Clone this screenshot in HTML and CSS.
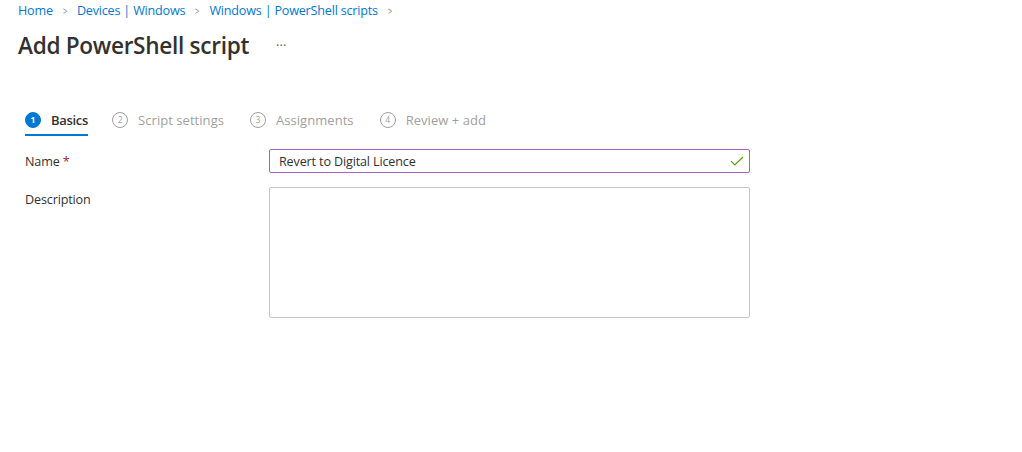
FILE: index.html
```html
<!DOCTYPE html>
<html lang="en">
<head>
    <meta charset="UTF-8">
    <title>Add PowerShell script</title>
    <link rel="stylesheet" href="styles.css">
</head>
<body>
    <nav class="breadcrumb">
        <a href="#">Home</a>
        <span class="sep">&gt;</span>
        <a href="#">Devices | Windows</a>
        <span class="sep">&gt;</span>
        <a href="#">Windows | PowerShell scripts</a>
        <span class="sep">&gt;</span>
    </nav>

    <div class="title-row">
        <h1>Add PowerShell script</h1>
        <span class="more">&middot;&middot;&middot;</span>
    </div>

    <div class="steps">
        <div class="step active">
            <span class="num">1</span>
            <span class="label">Basics</span>
        </div>
        <div class="step">
            <span class="num">2</span>
            <span class="label">Script settings</span>
        </div>
        <div class="step">
            <span class="num">3</span>
            <span class="label">Assignments</span>
        </div>
        <div class="step">
            <span class="num">4</span>
            <span class="label">Review + add</span>
        </div>
    </div>

    <div class="form">
        <label class="field-label" for="name">Name <span class="req">*</span></label>
        <div class="input-wrap">
            <input id="name" type="text" value="Revert to Digital Licence">
            <svg class="check" width="14" height="10" viewBox="0 0 14 10">
                <path d="M1 5.2 L4.8 9 L13 1" fill="none" stroke="#57a300" stroke-width="1.2"/>
            </svg>
        </div>

        <label class="field-label" for="desc">Description</label>
        <textarea id="desc"></textarea>
    </div>
</body>
</html>
```

FILE: styles.css
```css
body {
    margin: 0;
    padding: 0 18px;
    font-family: "Open Sans", "Liberation Sans", sans-serif;
    font-size: 13px;
    color: #323130;
    background: #fff;
}

.breadcrumb {
    padding-top: 2px;
    height: 18px;
    line-height: 18px;
    display: flex;
    align-items: center;
    gap: 9px;
    font-size: 12.6px;
    letter-spacing: -0.2px;
}

.breadcrumb a {
    color: #0078d4;
    text-decoration: none;
}

.breadcrumb .sep {
    color: #8a8886;
    font-size: 11px;
    transform: scaleX(0.7);
}

.title-row {
    display: flex;
    align-items: center;
    margin-top: 11px;
    height: 28px;
}

.title-row h1 {
    margin: 0;
    font-size: 22.6px;
    font-weight: 600;
    letter-spacing: -0.3px;
    color: #323130;
}

.more {
    margin-left: 27px;
    color: #605e5c;
    font-size: 13px;
    letter-spacing: 0;
}

.steps {
    display: flex;
    margin-top: 47px;
    padding-left: 7px;
    gap: 26px;
}

.step {
    display: flex;
    align-items: center;
    height: 28px;
    gap: 10px;
    color: #a19f9d;
    font-size: 13px;
    letter-spacing: 0.05px;
    border-bottom: 2px solid transparent;
}

.step.active {
    margin-right: -2px;
    color: #323130;
    font-weight: 600;
    letter-spacing: -0.3px;
    border-bottom-color: #0078d4;
}

.num {
    width: 14px;
    height: 14px;
    border: 1px solid #a19f9d;
    border-radius: 50%;
    font-size: 8.5px;
    font-weight: 400;
    line-height: 14px;
    text-align: center;
    letter-spacing: 0;
}

.step.active .num {
    background: #0078d4;
    border-color: #0078d4;
    color: #fff;
    font-weight: 700;
}

.form {
    display: grid;
    grid-template-columns: 244px 481px;
    row-gap: 14px;
    margin-top: 13px;
    padding-left: 7px;
}

.field-label {
    padding-top: 4px;
    font-size: 12.6px;
    letter-spacing: -0.15px;
}

.req {
    color: #a4262c;
}

.input-wrap {
    position: relative;
}

.input-wrap input {
    box-sizing: border-box;
    width: 100%;
    height: 24px;
    margin: 0;
    padding: 0 30px 0 9px;
    border: 1px solid #a561c9;
    border-radius: 2px;
    font-family: inherit;
    font-size: 12.6px;
    letter-spacing: -0.15px;
    color: #323130;
    outline: none;
}

.check {
    position: absolute;
    right: 6px;
    top: 7px;
}

textarea {
    box-sizing: border-box;
    width: 100%;
    height: 131px;
    margin: 0;
    border: 1px solid #c8c6c4;
    border-radius: 2px;
    resize: none;
    outline: none;
    font-family: inherit;
}
```
